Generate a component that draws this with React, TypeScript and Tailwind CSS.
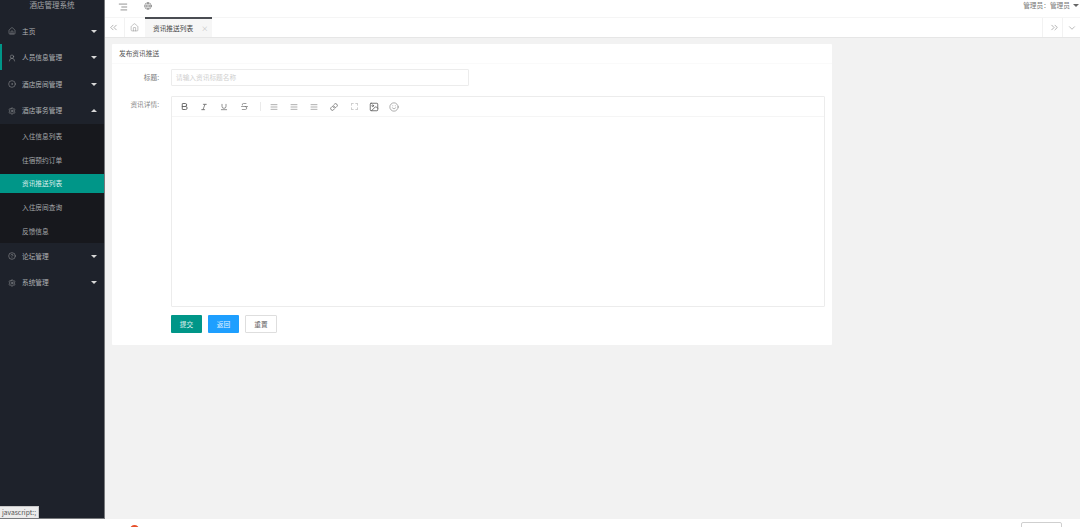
import React from "react";
import { Home, UserRound, Settings, Bold, Italic, Underline, Strikethrough, AlignJustify, Link, Image as ImageIcon, Smile, ChevronsLeft, ChevronsRight, ChevronDown, Globe, AlignRight, CircleDot, CircleHelp } from "lucide-react";

const font = { fontFamily: '"Noto Sans CJK SC", "Liberation Sans", sans-serif' };

function Caret({ up }: { up?: boolean }) {
  return (
    <span className={up ? "w-0 h-0 border-x-[3px] border-x-transparent border-b-[3px] border-b-[#d8d8d8]" : "w-0 h-0 border-x-[3px] border-x-transparent border-t-[3px] border-t-[#d8d8d8]"} />
  );
}

function Menu({ icon, label, up, h }: { icon: React.ReactNode; label: string; up?: boolean; h: string }) {
  return (
    <div className={`flex items-center pl-[8px] pr-[7px] text-[#b0b2b5] text-[6.7px] ${h}`}>
      <span className="w-[14px] flex text-[#a0a2a5]">{icon}</span>
      <span className="flex-1">{label}</span>
      <Caret up={up} />
    </div>
  );
}

function Sub({ label, active }: { label: string; active?: boolean }) {
  return (
    <div className={active ? "h-[20px] my-[2px] flex items-center pl-[22px] text-[6.7px] bg-[#009688] text-[#dceeec]" : "h-[24px] flex items-center pl-[22px] text-[6.7px] text-[#a6a8ab]"}>{label}</div>
  );
}

function Tool({ children }: { children: React.ReactNode }) {
  return <span className="w-[20px] flex justify-center text-[#5e5e5e]">{children}</span>;
}

export default function App() {
  const i = { size: 8, strokeWidth: 1.5 };
  return (
    <div className="w-[1080px] h-[527px] flex flex-col overflow-hidden bg-white relative" style={font}>
      <div className="flex h-[519px]">
        <aside className="w-[105px] shrink-0 bg-[#1e222b] border-r border-b border-[#77797c] flex flex-col">
          <div className="h-[10px] flex items-center justify-center text-[7.5px] text-[#a4a6a9]">酒店管理系统</div>
          <div className="relative mt-[8px]">
            <Menu h="h-[26px]" icon={<Home {...i} />} label="主页" />
            <div className="relative">
              <span className="absolute left-0 top-[0px] w-[2px] h-[26px] bg-[#009688]" />
              <Menu h="h-[27px]" icon={<UserRound {...i} />} label="人员信息管理" />
            </div>
            <Menu h="h-[26px]" icon={<CircleDot {...i} />} label="酒店房间管理" />
            <Menu h="h-[27px]" icon={<Settings {...i} />} label="酒店事务管理" up />
          </div>
          <div className="bg-[#17181d] h-[119px] flex flex-col">
            <Sub label="入住信息列表" />
            <Sub label="住宿预约订单" />
            <Sub label="资讯推送列表" active />
            <Sub label="入住房间查询" />
            <Sub label="反馈信息" />
          </div>
          <Menu h="h-[26px]" icon={<CircleHelp {...i} />} label="论坛管理" />
          <Menu h="h-[27px]" icon={<Settings {...i} />} label="系统管理" />
        </aside>
        <main className="flex-1 flex flex-col min-w-0 bg-[#f2f2f2]">
          <header className="h-[18px] bg-white border-b border-[#f5f5f5] flex items-start pt-[1px] pl-[13px] pr-[1px] text-[#555]">
            <span className="flex mt-[1px]"><AlignRight size={10} strokeWidth={1.5} /></span>
            <span className="ml-[16px] flex mt-[1px]"><Globe size={8} strokeWidth={1.5} /></span>
            <span className="ml-auto text-[6.7px] leading-[8px] text-[#777]">管理员：管理员</span>
            <span className="ml-[3px] mt-[3px] w-0 h-0 border-x-[3px] border-x-transparent border-t-[3px] border-t-[#666]" />
          </header>
          <nav className="h-[20px] bg-white border-b border-[#e6e6e6] flex items-stretch text-[#808080]">
            <span className="w-[20px] flex items-center justify-center border-r border-[#f2f2f2] pr-[3px]"><ChevronsLeft size={11} strokeWidth={1.3} /></span>
            <span className="w-[20px] flex items-center justify-center pr-[1px]"><Home size={9} strokeWidth={1.2} /></span>
            <span className="w-[67px] -mt-[1px] bg-[#f6f6f6] border-t-2 border-[#4a4d52] flex items-center pl-[8px] text-[6.7px] text-[#444] whitespace-nowrap">
              资讯推送列表
              <span className="ml-[8px] text-[7px] text-[#c2c2c2]">×</span>
            </span>
            <span className="ml-auto w-[20px] flex items-center justify-center border-l border-[#f2f2f2] pl-[3px]"><ChevronsRight size={11} strokeWidth={1.3} /></span>
            <span className="w-[18px] flex items-center justify-center border-l border-[#f2f2f2]"><ChevronDown size={10} strokeWidth={1.3} /></span>
          </nav>
          <div className="pl-[7px] pt-[6px]">
            <section className="w-[720px] h-[301px] bg-white rounded-[1px]">
              <div className="h-[20px] flex items-center pl-[7px] text-[6.7px] text-[#555] border-b border-[#fafafa]">发布资讯推送</div>
              <div className="flex mt-[5px] h-[17px]">
                <label className="w-[47px] text-right text-[6.7px] text-[#777] leading-[17px]">标题:</label>
                <div className="ml-[12px] w-[298px] border border-[#ececec] rounded-[1px] flex items-center pl-[4px] text-[6.7px] text-[#cfcfcf]">请输入资讯标题名称</div>
              </div>
              <div className="flex mt-[10px]">
                <label className="w-[47px] text-right text-[6.7px] text-[#888] leading-[17px]">资讯详情:</label>
                <div className="ml-[12px] w-[654px] h-[211px] border border-[#ececec] rounded-[1px]">
                  <div className="h-[20px] flex items-center pl-[2px] border-b border-[#f5f5f5]">
                    <Tool><Bold size={9} strokeWidth={2.4} /></Tool>
                    <Tool><Italic size={8} strokeWidth={2.2} /></Tool>
                    <Tool><Underline size={8} strokeWidth={2} /></Tool>
                    <Tool><Strikethrough size={9} strokeWidth={1.6} /></Tool>
                    <span className="w-px h-[9px] bg-[#eaeaea] mr-[3px] ml-[6px]" />
                    <Tool><AlignJustify size={8} strokeWidth={1.5} /></Tool>
                    <Tool><AlignJustify size={8} strokeWidth={1.5} /></Tool>
                    <Tool><AlignJustify size={8} strokeWidth={1.5} /></Tool>
                    <Tool><Link size={8} strokeWidth={2.2} /></Tool>
                    <span className="w-[20px] flex justify-center"><span className="w-[7px] h-[7px] border border-dashed border-[#cfcfcf]" /></span>
                    <Tool><ImageIcon size={10} strokeWidth={2} /></Tool>
                    <Tool><Smile size={10} strokeWidth={1.2} /></Tool>
                  </div>
                </div>
              </div>
              <div className="flex mt-[8px] ml-[59px] gap-[6px] text-[6.7px]">
                <button className="w-[31px] h-[18px] bg-[#009688] text-[#dff1ef] rounded-[1px]">提交</button>
                <button className="w-[31px] h-[18px] bg-[#1e9fff] text-[#e4f4ff] rounded-[1px]">返回</button>
                <button className="w-[32px] h-[18px] bg-white border border-[#dedede] text-[#666] rounded-[1px]">重置</button>
              </div>
            </section>
          </div>
        </main>
      </div>
      <div className="flex-1 bg-white relative">
        <span className="absolute left-[130px] top-[6px] w-[9px] h-[9px] rounded-full bg-[#e8502a]" />
        <span className="absolute left-[1021px] top-[3px] w-[41px] h-[10px] rounded-[2px] border border-[#cfcfcf]" />
      </div>
      <div className="absolute left-0 top-[506px] w-[39px] h-[12px] bg-[#ececec] border-t border-r border-[#c8c8c8] text-[6.7px] leading-[11px] pl-[2px] text-[#555]">javascript:;</div>
    </div>
  );
}
